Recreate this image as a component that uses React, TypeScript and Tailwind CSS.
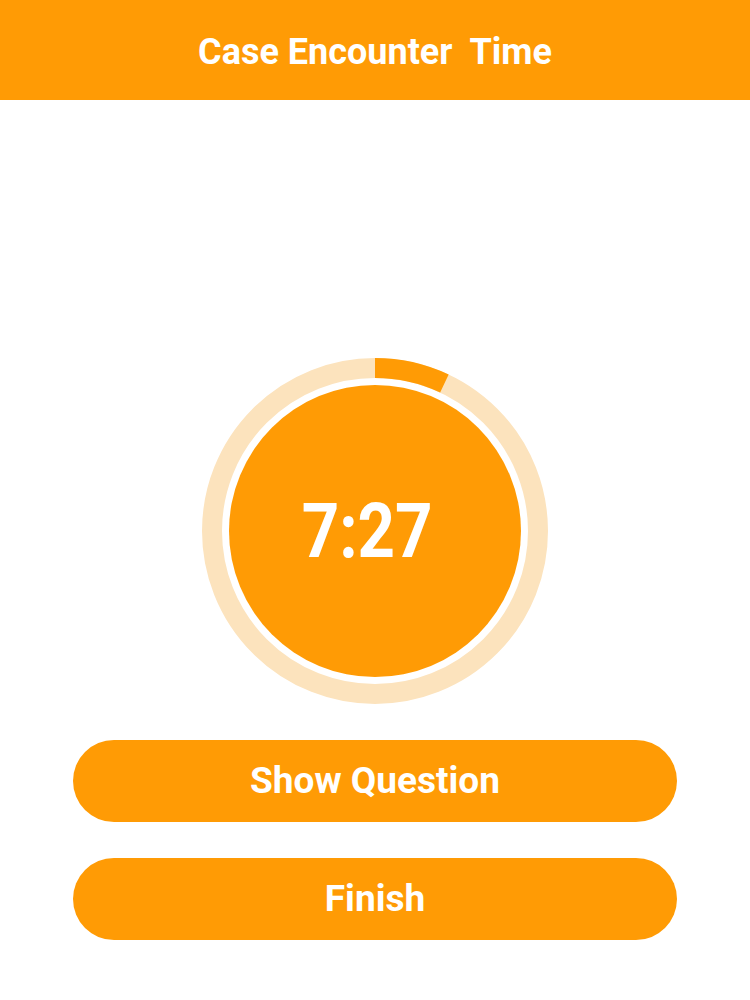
import React from 'react';

const ORANGE = '#ff9b05';

const TimerRing: React.FC<{ label: string; progress: number }> = ({ label, progress }) => {
  const size = 346;
  const c = size / 2;
  const r = 163;
  const angle = progress * 2 * Math.PI;
  const ex = c + r * Math.sin(angle);
  const ey = c - r * Math.cos(angle);

  return (
    <div className="relative w-[346px] h-[346px] flex items-center justify-center">
      <svg className="absolute inset-0" width={size} height={size} viewBox={`0 0 ${size} ${size}`}>
        <circle cx={c} cy={c} r={r} fill="none" stroke="#fce3bd" strokeWidth={20} />
        <path
          d={`M ${c} ${c - r} A ${r} ${r} 0 0 1 ${ex} ${ey}`}
          fill="none"
          stroke={ORANGE}
          strokeWidth={20}
          strokeLinecap="butt"
        />
        <circle cx={c} cy={c} r={146} fill={ORANGE} />
      </svg>
      <span className="relative mr-[16px] text-white font-bold text-[76px] leading-none scale-x-[0.86]">{label}</span>
    </div>
  );
};

const App: React.FC = () => {
  return (
    <div className="w-[750px] h-[1000px] bg-white flex flex-col" style={{ fontFamily: 'Roboto, "Liberation Sans", sans-serif' }}>
      <header className="h-[100px] pt-[4px] bg-[#ff9b05] flex items-center justify-center">
        <h1 className="text-white font-bold text-[36px] whitespace-pre">Case Encounter  Time</h1>
      </header>

      <main className="flex flex-col items-center pt-[258px]">
        <TimerRing label="7:27" progress={0.07} />

        <div className="mt-[36px] flex flex-col gap-[36px]">
          <button className="w-[604px] h-[82px] rounded-full bg-[#ff9b05] text-white font-bold text-[37px]">
            Show Question
          </button>
          <button className="w-[604px] h-[82px] rounded-full bg-[#ff9b05] text-white font-bold text-[37px]">
            Finish
          </button>
        </div>
      </main>
    </div>
  );
};

export default App;
